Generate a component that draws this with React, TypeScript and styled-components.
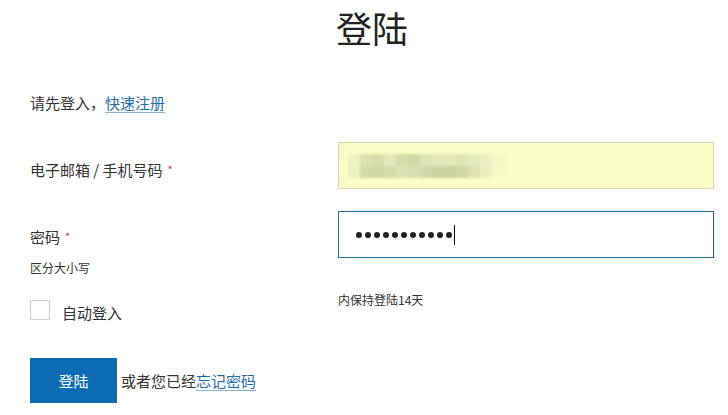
import React from "react";
import styled, { createGlobalStyle } from "styled-components";

const Global = createGlobalStyle`
  html, body { margin: 0; padding: 0; background: #fff; }
  body {
    font-family: "Microsoft YaHei", "Noto Sans CJK SC", "Noto Sans", sans-serif;
    color: #333;
  }
`;

const Page = styled.div`
  width: 728px;
  height: 415px;
  box-sizing: border-box;
  padding: 0 14px 0 30px;
  overflow: hidden;
`;

const Title = styled.h1`
  margin: 0;
  height: 56px;
  line-height: 54px;
  text-align: center;
  font-size: 36px;
  font-weight: 400;
  color: #222;
`;

const Intro = styled.p`
  margin: 37px 0 0;
  font-size: 15px;
  line-height: 20px;
`;

const Link = styled.a`
  color: #1f6fa6;
  text-decoration: underline;
  text-decoration-color: #8fb4cf;
  text-underline-offset: 3px;
  cursor: pointer;
`;

const Row = styled.div<{ $top: number }>`
  display: grid;
  grid-template-columns: 308px 376px;
  margin-top: ${(p) => p.$top}px;
`;

const LabelCol = styled.div<{ $pad: number }>`
  padding-top: ${(p) => p.$pad}px;
  display: flex;
  flex-direction: column;
`;

const Label = styled.label`
  font-size: 15px;
  line-height: 20px;
  color: #333;
`;

const Required = styled.span`
  color: #d0305a;
  font-size: 11px;
  margin-left: 5px;
  vertical-align: top;
  position: relative;
  top: -1px;
`;

const Note = styled.div<{ $top?: number }>`
  font-size: 12px;
  line-height: 18px;
  margin-top: ${(p) => p.$top ?? 0}px;
  color: #333;
`;

const Field = styled.div<{ $variant: "autofill" | "focus" }>`
  box-sizing: border-box;
  height: 47px;
  display: flex;
  align-items: center;
  padding-left: ${(p) => (p.$variant === "autofill" ? 9 : 17)}px;
  background: ${(p) => (p.$variant === "autofill" ? "#fafdc4" : "#fff")};
  border: 1px solid ${(p) => (p.$variant === "autofill" ? "#d6d8b4" : "#1f6a98")};
`;

const Mosaic = styled.div`
  display: grid;
  grid-template-columns: repeat(13, 12px);
  grid-template-rows: repeat(2, 12px);
  filter: blur(1px);
`;

const Cell = styled.span<{ $c: string }>`
  background: ${(p) => p.$c};
`;

const Dots = styled.div`
  display: flex;
  align-items: center;
  gap: 3px;
`;

const Dot = styled.span`
  width: 6px;
  height: 6px;
  border-radius: 50%;
  background: #222;
`;

const Caret = styled.span`
  width: 1px;
  height: 20px;
  background: #111;
  margin-left: 2px;
`;

const CheckRow = styled.div`
  display: flex;
  align-items: flex-start;
  gap: 12px;
  padding-top: 9px;
`;

const Box = styled.span`
  box-sizing: border-box;
  width: 20px;
  height: 20px;
  border: 1px solid #cfcfcf;
  background: #fff;
  flex: none;
`;

const CheckText = styled.span`
  font-size: 15px;
  line-height: 20px;
  margin-top: 3px;
`;

const Actions = styled.div`
  display: flex;
  align-items: center;
  gap: 4px;
  margin-top: 35px;
  font-size: 15px;
`;

const Button = styled.button`
  width: 87px;
  height: 45px;
  border: none;
  background: #0c6cb3;
  color: #fff;
  font-family: inherit;
  font-size: 15px;
  padding: 0;
  cursor: pointer;
`;

const mosaic = [
  "#edf1c4", "#dce1b0", "#d7dcab", "#e4e8ba", "#d6dbaa", "#d3d8a8", "#dfe4b6", "#e2e6b9", "#e3e7bb", "#e0e5b7", "#e6ebbe", "#ebefc3", "#f3f6c8",
  "#ecf0c4", "#d4d9a8", "#d2d7a6", "#d6dbaa", "#dfe3b4", "#d9deae", "#d4d9a9", "#ced3a2", "#ccd1a0", "#d3d8a6", "#dde1b2", "#ebefc3", "#f6f9c8",
];

export default function App() {
  return (
    <>
      <Global />
      <Page>
        <Title>登陆</Title>
        <Intro>
          请先登入，<Link>快速注册</Link>
        </Intro>

        <Row $top={29}>
          <LabelCol $pad={18}>
            <Label>
              电子邮箱 / 手机号码<Required>*</Required>
            </Label>
          </LabelCol>
          <Field $variant="autofill">
            <Mosaic>
              {mosaic.map((c, i) => (
                <Cell key={i} $c={c} />
              ))}
            </Mosaic>
          </Field>
        </Row>

        <Row $top={22}>
          <LabelCol $pad={16}>
            <Label>
              密码<Required>*</Required>
            </Label>
            <Note $top={12}>区分大小写</Note>
          </LabelCol>
          <div>
            <Field $variant="focus">
              <Dots>
                {Array.from({ length: 11 }).map((_, i) => (
                  <Dot key={i} />
                ))}
              </Dots>
              <Caret />
            </Field>
          </div>
        </Row>

        <Row $top={14}>
          <CheckRow>
            <Box />
            <CheckText>自动登入</CheckText>
          </CheckRow>
          <Note>内保持登陆14天</Note>
        </Row>

        <Actions>
          <Button>登陆</Button>
          <span>
            或者您已经<Link>忘记密码</Link>
          </span>
        </Actions>
      </Page>
    </>
  );
}
